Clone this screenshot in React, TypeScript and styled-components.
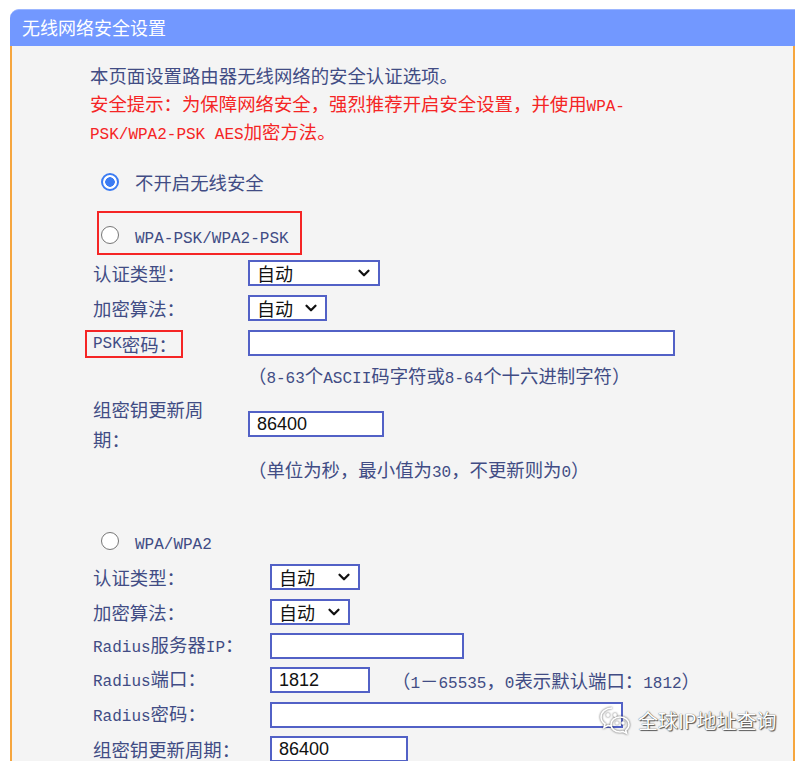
import React from 'react';
import styled, { createGlobalStyle } from 'styled-components';
import { ChevronDown } from 'lucide-react';

const GlobalStyle = createGlobalStyle`
    html, body {
        margin: 0;
        background: #ffffff;
        overflow: hidden;
    }
`;

const palette = {
    blue: '#7298ff',
    panel: '#f4f4f4',
    orange: '#f6a63e',
    text: '#414c84',
    red: '#f52525',
    border: '#5261c6',
};

const cjk = `"Noto Sans CJK SC", "Noto Sans", sans-serif`;

const Page = styled.div`
    position: relative;
    padding: 9px 6px 0 10px;
    height: 761px;
    box-sizing: border-box;
`;

const Panel = styled.div`
    width: 785px;
`;

const Header = styled.div`
    height: 37px;
    background: ${palette.blue};
    border-top: 1px solid #9cb6ff;
    border-top-left-radius: 9px;
    box-sizing: border-box;
    padding-left: 12px;
    color: #ffffff;
    font-family: ${cjk};
    font-size: 18px;
    line-height: 35px;
`;

const Body = styled.div`
    background: ${palette.panel};
    border-left: 2px solid ${palette.orange};
    border-right: 2px solid ${palette.orange};
    height: 720px;
    padding: 15px 0 0 73px;
    box-sizing: border-box;
    font-family: ${cjk};
    font-size: 18.4px;
    color: ${palette.text};
`;

const Latin = styled.span`
    font-family: 'Liberation Mono', 'DejaVu Sans Mono', monospace;
    font-size: 16px;
`;

const RadioText = styled(Latin)`
    padding-top: 7px;
`;

const Line = styled.div<{ $red?: boolean }>`
    margin-left: 5px;
    height: 28px;
    line-height: 28px;
    white-space: nowrap;
    color: ${(p) => (p.$red ? palette.red : palette.text)};
`;

const RadioRow = styled.div<{ $top: number; $pad: number }>`
    display: flex;
    align-items: center;
    gap: 16px;
    height: 30px;
    margin-top: ${(p) => p.$top}px;
    padding-left: ${(p) => p.$pad}px;
    white-space: nowrap;
`;

const RedBox = styled.div`
    width: 205px;
    height: 44px;
    margin: 14px 0 0 12px;
    border: 2px solid ${palette.red};
    box-sizing: border-box;
    padding-top: 7px;
`;

const Radio = styled.span<{ $checked?: boolean }>`
    width: 18px;
    height: 18px;
    flex-shrink: 0;
    border-radius: 50%;
    box-sizing: border-box;
    border: ${(p) => (p.$checked ? '2px solid #3c7cf3' : '1.5px solid #767676')};
    background: ${(p) =>
        p.$checked
            ? 'radial-gradient(circle, #3c7cf3 0 4.5px, #ffffff 5px)'
            : '#ffffff'};
`;

const Row = styled.div<{ $h?: number; $col: number; $top?: number }>`
    display: flex;
    align-items: center;
    height: ${(p) => p.$h ?? 35}px;
    margin-top: ${(p) => p.$top ?? 0}px;
    & > :first-child {
        width: ${(p) => p.$col}px;
        flex-shrink: 0;
    }
`;

const Label = styled.div`
    box-sizing: border-box;
    padding-left: 8px;
    white-space: nowrap;
    line-height: 30px;
`;

const WrapText = styled.div<{ $w: number }>`
    width: ${(p) => p.$w}px;
    white-space: normal;
`;

const LabelCell = styled.div``;

const RedTag = styled.span`
    display: inline-flex;
    align-items: center;
    height: 28px;
    box-sizing: border-box;
    border: 2px solid ${palette.red};
    padding: 0 4px 0 6px;
    white-space: nowrap;
`;

const Select = styled.div<{ $w: number }>`
    display: flex;
    align-items: center;
    justify-content: space-between;
    width: ${(p) => p.$w}px;
    height: 26px;
    box-sizing: border-box;
    border: 2px solid ${palette.border};
    background: #ffffff;
    padding: 0 5px 0 7px;
    color: #111111;
    font-family: ${cjk};
    font-size: 18px;
`;

const Input = styled.div<{ $w: number }>`
    display: flex;
    align-items: center;
    width: ${(p) => p.$w}px;
    height: 26px;
    box-sizing: border-box;
    border: 2px solid ${palette.border};
    background: #ffffff;
    padding-left: 7px;
    color: #111111;
    font-family: 'Liberation Sans', Arial, sans-serif;
    font-size: 18px;
`;

const Hint = styled.div<{ $left: number }>`
    height: 30px;
    line-height: 30px;
    padding-left: ${(p) => p.$left}px;
    white-space: nowrap;
`;

const InlineHint = styled.span`
    margin-left: 22px;
    white-space: nowrap;
`;

const Watermark = styled.div`
    position: absolute;
    left: 598px;
    top: 705px;
    display: flex;
    align-items: center;
    gap: 6px;
    color: #ffffff;
    font-family: ${cjk};
    font-size: 20px;
    text-shadow: 0 0 1px #333, 1px 1px 1px #555;
    svg {
        filter: drop-shadow(0 0 1px rgba(0, 0, 0, 0.7));
    }
`;

const Mixed = ({ children }: { children: string }) => (
    <>
        {children
            .split(/([\x20-\x7e]+)/)
            .map((part, i) =>
                /[\x20-\x7e]/.test(part) ? <Latin key={i}>{part}</Latin> : part
            )}
    </>
);

const Chevron = () => <ChevronDown size={18} strokeWidth={3} color="#111" />;

const WechatIcon = () => (
    <svg width="34" height="30" viewBox="0 0 34 30" fill="none" stroke="#ffffff" strokeWidth="1.6">
        <path d="M14 3c-6 0-11 4-11 9 0 3 1.6 5.4 4 7l-1 3.5 4-2c1.2.3 2.5.5 4 .5" />
        <circle cx="10" cy="10" r="1.1" fill="#fff" />
        <circle cx="17" cy="10" r="1.1" fill="#fff" />
        <path d="M22 12c5 0 9 3.3 9 7.5 0 2.4-1.3 4.4-3.3 5.8l.8 3-3.4-1.7c-1 .3-2 .4-3.1.4-5 0-9-3.3-9-7.5S17 12 22 12z" />
        <circle cx="19" cy="18" r="1" fill="#fff" />
        <circle cx="25" cy="18" r="1" fill="#fff" />
    </svg>
);

const App = () => {
    return (
        <>
            <GlobalStyle />
            <Page>
                <Panel>
                    <Header>无线网络安全设置</Header>
                    <Body>
                        <Line>本页面设置路由器无线网络的安全认证选项。</Line>
                        <Line $red>
                            <Mixed>安全提示：为保障网络安全，强烈推荐开启安全设置，并使用WPA-</Mixed>
                        </Line>
                        <Line $red>
                            <Mixed>PSK/WPA2-PSK AES加密方法。</Mixed>
                        </Line>

                        <RadioRow $top={22} $pad={16}>
                            <Radio $checked />
                            <span>不开启无线安全</span>
                        </RadioRow>

                        <RedBox>
                            <RadioRow $top={0} $pad={2}>
                                <Radio />
                                <RadioText>WPA-PSK/WPA2-PSK</RadioText>
                            </RadioRow>
                        </RedBox>

                        <Row $col={163}>
                            <Label>认证类型：</Label>
                            <Select $w={132}>
                                自动
                                <Chevron />
                            </Select>
                        </Row>
                        <Row $col={163}>
                            <Label>加密算法：</Label>
                            <Select $w={79}>
                                自动
                                <Chevron />
                            </Select>
                        </Row>
                        <Row $col={163}>
                            <LabelCell>
                                <RedTag>
                                    <Mixed>PSK密码：</Mixed>
                                </RedTag>
                            </LabelCell>
                            <Input $w={427} />
                        </Row>
                        <Hint $left={163}>
                            <Mixed>（8-63个ASCII码字符或8-64个十六进制字符）</Mixed>
                        </Hint>
                        <Row $col={163} $h={60} $top={4}>
                            <Label>
                                <WrapText $w={120}>组密钥更新周期：</WrapText>
                            </Label>
                            <Input $w={136}>86400</Input>
                        </Row>
                        <Hint $left={163}>
                            <Mixed>（单位为秒，最小值为30，不更新则为0）</Mixed>
                        </Hint>

                        <RadioRow $top={42} $pad={16}>
                            <Radio />
                            <RadioText>WPA/WPA2</RadioText>
                        </RadioRow>

                        <Row $col={185} $h={34.4} $top={4}>
                            <Label>认证类型：</Label>
                            <Select $w={90}>
                                自动
                                <Chevron />
                            </Select>
                        </Row>
                        <Row $col={185} $h={34.4}>
                            <Label>加密算法：</Label>
                            <Select $w={80}>
                                自动
                                <Chevron />
                            </Select>
                        </Row>
                        <Row $col={185} $h={34.4}>
                            <Label>
                                <Mixed>Radius服务器IP：</Mixed>
                            </Label>
                            <Input $w={194} />
                        </Row>
                        <Row $col={185} $h={34.4}>
                            <Label>
                                <Mixed>Radius端口：</Mixed>
                            </Label>
                            <Input $w={100}>1812</Input>
                            <InlineHint>
                                <Mixed>（1－65535，0表示默认端口：1812）</Mixed>
                            </InlineHint>
                        </Row>
                        <Row $col={185} $h={34.4}>
                            <Label>
                                <Mixed>Radius密码：</Mixed>
                            </Label>
                            <Input $w={353} />
                        </Row>
                        <Row $col={185} $h={34.4}>
                            <Label>组密钥更新周期：</Label>
                            <Input $w={138}>86400</Input>
                        </Row>
                    </Body>
                </Panel>
                <Watermark>
                    <WechatIcon />
                    <span>全球IP地址查询</span>
                </Watermark>
            </Page>
        </>
    );
};

export default App;
